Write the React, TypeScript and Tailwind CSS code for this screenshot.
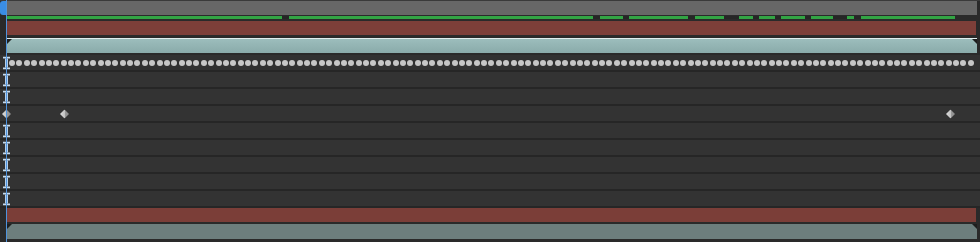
import React from "react";

const gaps: [number, number][] = [
  [282, 289],
  [593, 600],
  [623, 629],
  [688, 695],
  [724, 739],
  [753, 759],
  [775, 781],
  [805, 811],
  [833, 847],
  [854, 861],
];

// turn the gap list into green / dark pieces between x=7 and x=955
const pieces = (() => {
  const out: { w: number; on: boolean }[] = [];
  let x = 7;
  for (const [a, b] of gaps) {
    out.push({ w: a - x, on: true });
    out.push({ w: b - a, on: false });
    x = b;
  }
  out.push({ w: 955 - x, on: true });
  return out;
})();

const IBeam = () => (
  <svg width="7" height="13" viewBox="0 0 7 13" className="absolute left-[3px] top-1/2 -translate-y-1/2">
    <rect x="0" y="0" width="7" height="2" fill="#c3daf0" />
    <rect x="2" y="2" width="3" height="9" fill="#b4cfeb" />
    <rect x="0" y="11" width="7" height="2" fill="#c3daf0" />
  </svg>
);

const Diamond = ({ x }: { x: number }) => (
  <svg
    width="9"
    height="9"
    viewBox="0 0 9 9"
    className="absolute top-1/2 -translate-y-1/2"
    style={{ left: x - 4.5 }}
  >
    <defs>
      <linearGradient id="dg" x1="0" x2="1" y1="0" y2="0">
        <stop offset="0" stopColor="#dcdcdc" />
        <stop offset="0.5" stopColor="#c4c4c4" />
        <stop offset="0.55" stopColor="#9a9a9a" />
        <stop offset="1" stopColor="#8a8a8a" />
      </linearGradient>
    </defs>
    <polygon points="4.5,0 9,4.5 4.5,9 0,4.5" fill="url(#dg)" />
  </svg>
);

const Corners = () => (
  <>
    <svg width="5" height="5" className="absolute left-0 top-0">
      <polygon points="0,0 5,0 0,5" fill="#1e1e1e" />
    </svg>
    <svg width="5" height="5" className="absolute right-0 top-0">
      <polygon points="0,0 5,0 5,5" fill="#1e1e1e" />
    </svg>
  </>
);

const Row = ({ children }: { children?: React.ReactNode }) => (
  <>
    <div className="h-[2px] bg-[#262626]" />
    <div className="relative h-[15px] bg-[#333333]">{children}</div>
  </>
);

export default function App() {
  return (
    <div className="relative w-[980px] h-[242px] overflow-hidden bg-[#2a2a2a] flex flex-col">
      <div className="h-px bg-[#3a3a3a]" />
      <div className="h-[14px] pl-[7px] pr-[3px]">
        <div className="h-full bg-[#676767]" />
      </div>
      <div className="h-px" />
      <div className="h-[3px] pl-[7px] flex">
        {pieces.map((p, i) => (
          <div
            key={i}
            className={p.on ? "h-full bg-[#32a444]" : "h-full bg-[#262626]"}
            style={{ width: p.w }}
          />
        ))}
      </div>
      <div className="h-[2px]" />
      <div className="h-[14px] pl-[7px] pr-[4px]">
        <div className="h-full bg-[#7d3f39]" />
      </div>
      <div className="h-[3px]" />
      <div className="h-[15px] pl-[7px] pr-[3px]">
        <div className="relative h-full border-t border-[#e2eded] bg-gradient-to-b from-[#9cbdbc] to-[#8aabaa]">
          <Corners />
        </div>
      </div>
      <div className="h-[2px]" />

      <div className="relative h-[15px] bg-[#313131]">
        <IBeam />
        <div className="ml-[9px] w-[965px] h-full flex items-center justify-between">
          {Array.from({ length: 131 }).map((_, i) => (
            <div key={i} className="w-[6px] h-[6px] rounded-full bg-[#c6c6c6]" />
          ))}
        </div>
      </div>
      <Row>
        <IBeam />
      </Row>
      <Row>
        <IBeam />
      </Row>
      <Row>
        <Diamond x={6} />
        <Diamond x={64} />
        <Diamond x={950} />
      </Row>
      <Row>
        <IBeam />
      </Row>
      <Row>
        <IBeam />
      </Row>
      <Row>
        <IBeam />
      </Row>
      <Row>
        <IBeam />
      </Row>
      <Row>
        <IBeam />
      </Row>

      <div className="h-[2px] bg-[#262626]" />
      <div className="h-[14px] pl-[7px] pr-[4px]">
        <div className="h-full bg-[#7b3e38]" />
      </div>
      <div className="h-[2px]" />
      <div className="h-[15px] pl-[7px] pr-[3px]">
        <div className="relative h-full bg-[#6d7e7d]">
          <Corners />
        </div>
      </div>

      {/* playhead */}
      <div className="absolute left-[6px] top-0 bottom-0 w-px bg-[#4f93dc]" />
      <div className="absolute left-0 top-[1px] w-[6px] h-[14px] rounded-l-[3px] bg-[#3a8de4]" />
    </div>
  );
}
